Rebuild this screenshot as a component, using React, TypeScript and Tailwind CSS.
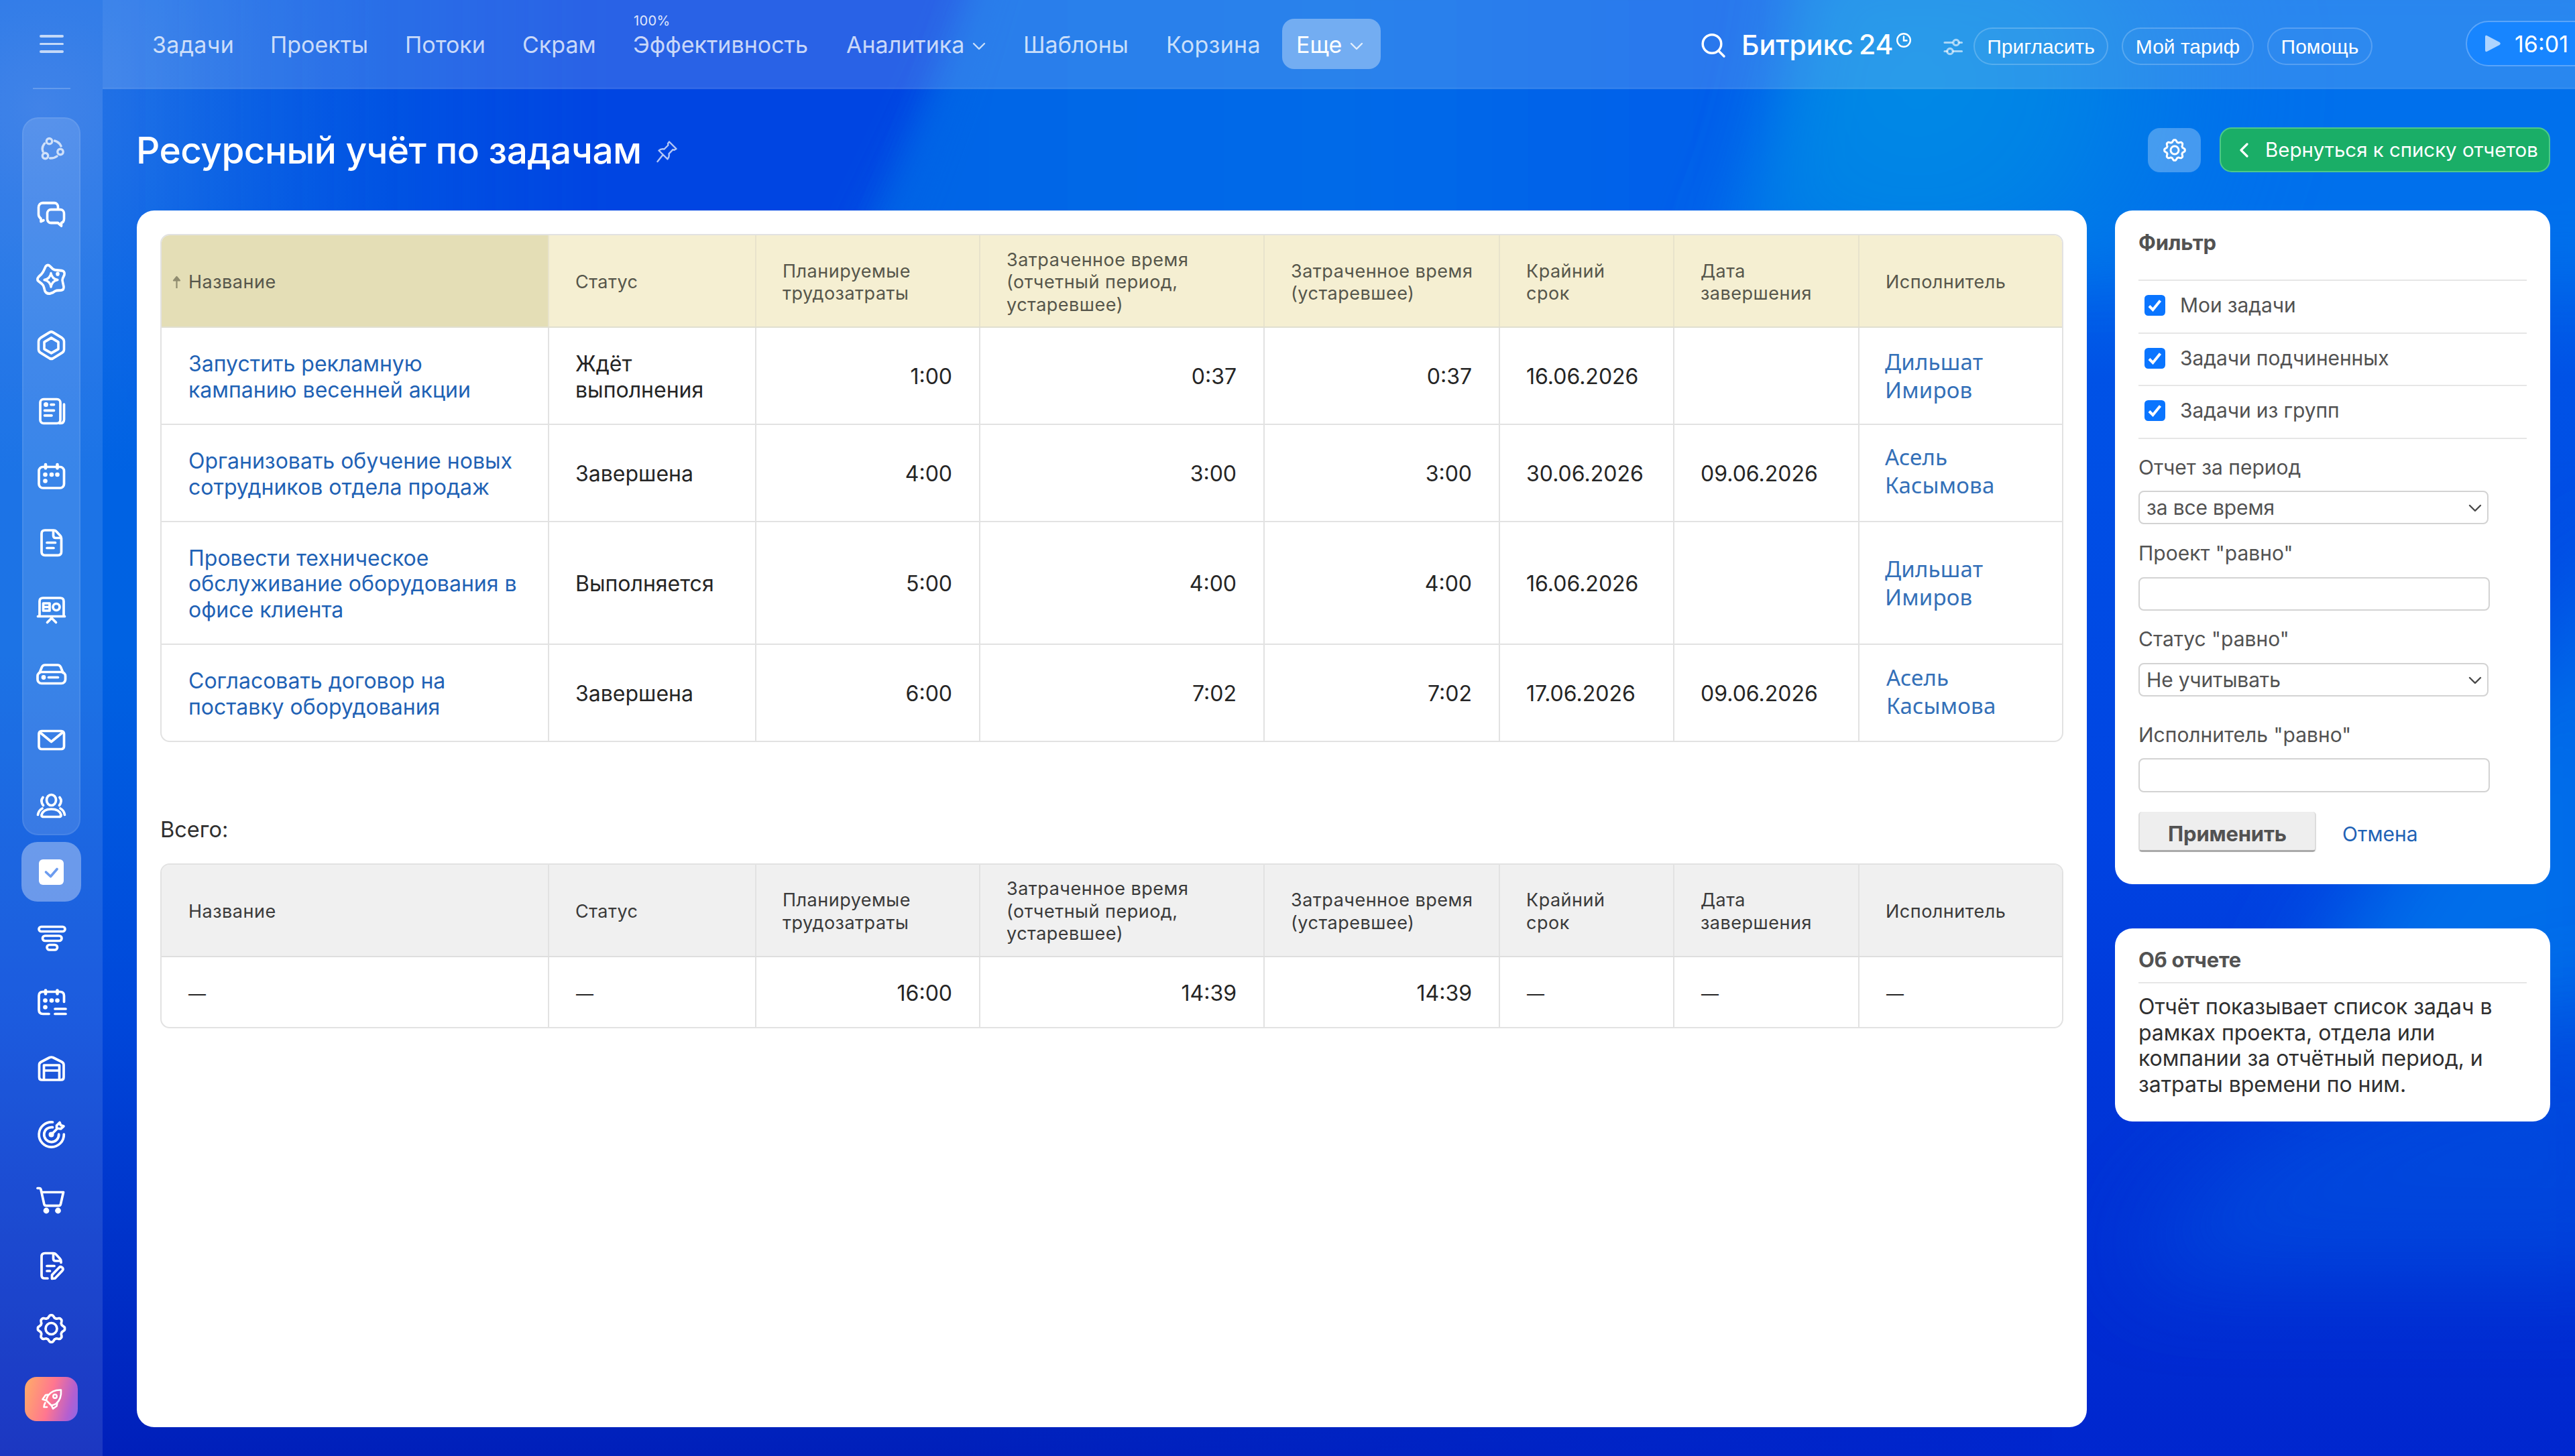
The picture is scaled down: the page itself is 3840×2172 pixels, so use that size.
import React from "react";
import type { ReactNode } from "react";

/* ---------- Wallpaper ---------- */

function Wallpaper() {
  return (
    <svg
      className="absolute inset-0 h-full w-full"
      viewBox="0 0 3840 2172"
      preserveAspectRatio="none"
      aria-hidden="true"
    >
      <defs>
        <linearGradient id="base" x1="0" y1="0" x2="0" y2="1">
          <stop offset="0" stopColor="#0062e6" />
          <stop offset="0.45" stopColor="#0062e2" />
          <stop offset="0.7" stopColor="#0047da" />
          <stop offset="1" stopColor="#001fba" />
        </linearGradient>
        <linearGradient id="bottom" x1="1400" y1="0" x2="3100" y2="0" gradientUnits="userSpaceOnUse">
          <stop offset="0" stopColor="#0026ce" stopOpacity="0" />
          <stop offset="1" stopColor="#0026ce" />
        </linearGradient>
        <linearGradient id="deep" x1="200" y1="0" x2="900" y2="0" gradientUnits="userSpaceOnUse">
          <stop offset="0" stopColor="#0046e0" stopOpacity="0" />
          <stop offset="1" stopColor="#0044e2" />
        </linearGradient>
        <linearGradient id="mid" x1="1300" y1="0" x2="2700" y2="0" gradientUnits="userSpaceOnUse">
          <stop offset="0" stopColor="#0064e6" />
          <stop offset="0.5" stopColor="#006ae8" />
          <stop offset="1" stopColor="#005cea" />
        </linearGradient>
        <linearGradient id="right" x1="0" y1="300" x2="0" y2="2172" gradientUnits="userSpaceOnUse">
          <stop offset="0" stopColor="#006eea" />
          <stop offset="0.14" stopColor="#0052e6" />
          <stop offset="0.5" stopColor="#0044e2" />
          <stop offset="0.72" stopColor="#0036d8" />
          <stop offset="1" stopColor="#0026ce" />
        </linearGradient>
        <radialGradient id="topLeft" cx="60" cy="160" r="560" gradientUnits="userSpaceOnUse">
          <stop offset="0" stopColor="#2a74e6" />
          <stop offset="1" stopColor="#1a70e6" stopOpacity="0" />
        </radialGradient>
        <radialGradient id="cyan" cx="2860" cy="120" r="560" gradientUnits="userSpaceOnUse">
          <stop offset="0" stopColor="#008ae6" />
          <stop offset="0.4" stopColor="#0082e6" />
          <stop offset="1" stopColor="#0074ea" stopOpacity="0" />
        </radialGradient>
        <filter id="b30" x="-20%" y="-20%" width="140%" height="140%">
          <feGaussianBlur stdDeviation="30" />
        </filter>
        <filter id="b50" x="-20%" y="-20%" width="140%" height="140%">
          <feGaussianBlur stdDeviation="50" />
        </filter>
        <filter id="b80" x="-50%" y="-50%" width="200%" height="200%">
          <feGaussianBlur stdDeviation="70" />
        </filter>
      </defs>
      <rect width="3840" height="2172" fill="url(#base)" />
      <rect x="1400" y="2000" width="1800" height="172" fill="url(#bottom)" />
      <rect width="1000" height="900" fill="url(#topLeft)" />
      <path d="M200 -80 H1480 Q1400 120 1290 340 L1200 600 H200Z" fill="url(#deep)" filter="url(#b30)" />
      <path d="M1480 -80 H2700 V600 H1220 Q1400 200 1480 -80Z" fill="url(#mid)" filter="url(#b30)" />
      <rect x="3060" y="280" width="780" height="1892" fill="url(#right)" />
      <path d="M2690 -80 H3940 V400 H2560 Q2670 200 2690 -80Z" fill="#0070ec" filter="url(#b50)" />
      <path d="M2690 -80 H3940 V400 H2560 Q2670 200 2690 -80Z" fill="url(#cyan)" filter="url(#b50)" />
      <path d="M3480 1400 Q3600 1200 3940 800 V1560 H3400Z" fill="#006eea" filter="url(#b80)" />
      <path d="M3180 1900 Q3300 1640 3940 1480 V1900Z" fill="#0050e0" opacity="0.7" filter="url(#b80)" />
    </svg>
  );
}

/* ---------- Icons ---------- */

function gearPath(cx: number, cy: number, r: number, amp: number) {
  let d = "";
  for (let i = 0; i < 160; i++) {
    const a = (i / 160) * Math.PI * 2;
    const rr = r + amp * Math.max(-0.8, Math.min(0.8, Math.cos(8 * a)));
    d += `${i ? "L" : "M"}${(cx + rr * Math.sin(a)).toFixed(2)} ${(cy - rr * Math.cos(a)).toFixed(2)}`;
  }
  return d + "Z";
}

const Dot = ({ x, y, r = 3.3 }: { x: number; y: number; r?: number }) => (
  <circle cx={x} cy={y} r={r} fill="currentColor" stroke="none" />
);

const groupIcons: ReactNode[] = [
  <g opacity="0.72" strokeWidth="3.4">
    <circle cx="73.500" cy="210.700" r="4.200" />
    <circle cx="90" cy="226.500" r="4.200" />
    <circle cx="67.500" cy="232.500" r="4.200" />
    <path d="M81.500 210q7 2 9.500 8M66.500 214q-5 6-2.500 12M74.500 236q6 .500 10.500-3" />
  </g>,
  <g transform="translate(0 -17.6) scale(1 1.11)" strokeWidth="3.600">
    <path d="M86.500 296v-2a5.500 5.500 0 0 0-5.500-5.500H63.500a6 6 0 0 0-6 6V304c0 3 1.500 4.500 3.500 5.500v4l4-1.500" />
    <path d="M76 297.500h14a5.500 5.500 0 0 1 5.500 5.500v7a5.500 5.500 0 0 1-4 5.300v4.200l-5-4H76a5.500 5.500 0 0 1-5.500-5.500v-7a5.500 5.500 0 0 1 5.500-5.500z" />
  </g>,
  <g transform="translate(0 -17.6) scale(1 1.11)" strokeWidth="3.600">
    <path d="M75 374l4 3.500q2 1.500 6 1.500l7 .500q5 1 4 5.500l-2.500 5q-1 2.500 0 5l1.500 6q.500 4.500-4 5l-7 .500q-2 .500-5 2.500l-5 1.500q-5 .500-7-3.500l-1.500-5q-.500-2.500-3.500-5l-5-3.500q-2.500-2.500.500-5.500l4.500-4q2-2 3.500-5l2.500-5q3-3.500 7 0z" />
    <path strokeWidth="3.200" d="M76 383q1.500 7.500 10 9q-8.500 1.500-10 9.500q-1.500-8-10-9.500q8.500-1.500 10-9z" />
    <Dot x={86} y={384} r={2.8} />
  </g>,
  <g transform="translate(0 -17.6) scale(1 1.11)" strokeWidth="3.600">
    <path d="M79 462.500l13.500 7.500q3 1.800 3 5v10.500q0 3-3 4.500L79 497.500q-2.500 1.200-5 0L60.500 490q-3-1.500-3-4.500V475q0-3.200 3-5L74 462.500q2.500-1.200 5 0z" />
    <path d="M76.500 470l10.500 5.500v9.500l-10.500 5.500L66 485v-9.500z" />
  </g>,
  <g>
    <rect x="60" y="595.500" width="30" height="36" rx="5" />
    <path d="M95.500 603v23q0 5.500-6.500 5.500M76 603.600h4.500M66.500 612.300h14M66.500 619.800h10.500" />
    <Dot x={68.5} y={603.6} r={3.5} />
  </g>,
  <g>
    <rect x="58" y="696.500" width="37.500" height="31.500" rx="6" />
    <path d="M68 693v5.500M85.500 693v5.500" strokeWidth="4.600" />
    <Dot x={67.5} y={708} />
    <Dot x={77} y={708} />
    <Dot x={85.5} y={708} />
    <Dot x={67.5} y={717.5} />
  </g>,
  <g>
    <path d="M67 791h13q2.500 0 4 1.800l6 6.500q1.500 1.700 1.500 4v20q0 5-5 5h-19.500q-5 0-5-5v-27.300q0-5 5-5z" />
    <path d="M79.500 792v7q0 3.500 3.500 3.500h7.500M70 809.500h12.500M70 817.500h10" />
  </g>,
  <g>
    <path d="M59 918v-21q0-5 5-5h26q5 0 5 5v21M56.500 919.500h40M70.500 928.500l6.500-6.500 6.500 6.500" />
    <path d="M64.500 900h9.500v11h-9.500zM64.500 905.500h9.500" />
    <circle cx="84" cy="905.500" r="5" />
  </g>,
  <g>
    <path d="M59 1003.500l3.500-8.500q1.500-3 4.500-3h19q3 0 4.500 3l3.500 8.500" />
    <rect x="56" y="1002.500" width="41.500" height="17" rx="6" />
    <Dot x={65} y={1010.5} r={3.4} />
    <path d="M72.500 1010.500h14" />
  </g>,
  <g>
    <rect x="58" y="1090.500" width="37.500" height="27" rx="4" />
    <path d="M59.500 1092.500l17 14 17-14" />
  </g>,
  <g>
    <ellipse cx="76.500" cy="1193.500" rx="7" ry="8" />
    <path d="M65.500 1218.500h22q4 0 3.500-3q-2.500-8.500-14.500-8.500t-14.500 8.500q-.500 3 3.500 3zM64 1189.500q-4.500 5.500 .500 12M89 1189.500q4.500 5.500-.500 12M56.500 1215.500q1-6.500 6.500-9.500M96.500 1215.500q-1-6.500-6.500-9.500" />
  </g>,
];

const lowerIcons: ReactNode[] = [
  <g>
    <rect x="58" y="1382.500" width="39" height="7" rx="3.500" />
    <rect x="63.500" y="1396" width="28.500" height="7.500" rx="3.700" />
    <rect x="70" y="1409.500" width="15.500" height="7.500" rx="3.700" />
  </g>,
  <g>
    <path d="M73 1512.500h-9q-6 0-6-6v-21q0-6 6-6h25.500q6 0 6 6v9M82 1505h16M82 1512.500h16" />
    <path d="M68 1477.500v5M85.500 1477.500v5" strokeWidth="4.600" />
    <Dot x={67.5} y={1492.5} />
    <Dot x={77} y={1492.5} />
    <Dot x={85.5} y={1492.5} />
    <Dot x={67.5} y={1502.5} />
  </g>,
  <g>
    <path d="M58.500 1606.500v-18q0-3 3-4.500l12.500-6.500q2.500-1 5 0l13 6.500q3 1.500 3 4.500v18.500q0 4-4 4h-28.500q-4 0-4-4z" />
    <path d="M65.500 1610.500v-21.500h23v21.500M65.500 1597h23" />
  </g>,
  <g>
    <path d="M78.500 1674a18.600 18.600 0 1 0 16.800 18M78.500 1681.700a11 11 0 1 0 9.200 10.500M76.500 1692.500l8.500-8.500M84.500 1683v-4l4.500-4.500 1.500 4 4.500 1.500-4.500 4z" />
    <Dot x={76.5} y={1692.5} r={4} />
  </g>,
  <g>
    <path d="M56 1772.500h2.500q2 0 2.500 2l4.800 21.700q.700 2.500 3.200 2.500h18.500q2.500 0 3-2.500l4-17.700h-32" />
    <Dot x={69} y={1806} r={4.4} />
    <Dot x={86.5} y={1806} r={4.4} />
  </g>,
  <g>
    <path d="M71 1907h-4.500q-4.500 0-4.500-4.500v-28q0-5 5-5h12.500q2.500 0 4 1.800l6 6.500q1.500 1.700 1.500 4v1.700" />
    <path d="M79.500 1870.500v7q0 3.500 3.500 3.500h7M70 1888.500h11M70 1896h4.500M77.500 1907.500v-5.500l11-11.500q2-1.800 4.500.500q2 2.500 0 4.500l-11 11.500z" />
  </g>,
  <g>
    <path d={gearPath(76.5, 1982, 18.3, 2.2)} />
    <circle cx="76.500" cy="1982" r="8.500" />
  </g>,
];

function RailIcon({ y, children }: { y: number; children: ReactNode }) {
  return (
    <svg
      className="h-full w-full"
      viewBox={`35 ${y} 83 97`}
      fill="none"
      stroke="currentColor"
      strokeWidth="3.700"
      strokeLinecap="round"
      strokeLinejoin="round"
    >
      {children}
    </svg>
  );
}

const Chevron = ({ className }: { className: string }) => (
  <svg className={className} viewBox="0 0 20 12" fill="none" stroke="currentColor" strokeWidth="2.400" strokeLinecap="round" strokeLinejoin="round">
    <path d="M2 2l8 8 8-8" />
  </svg>
);

/* ---------- Sidebar ---------- */

function Sidebar() {
  return (
    <aside className="relative flex h-full w-[153px] shrink-0 flex-col items-center bg-white/[0.11] text-white">
      <div className="flex h-[133px] flex-col items-center">
        <div className="mt-[52px] flex flex-col gap-[8px] opacity-70">
          <span className="block h-[3.500px] w-[36px] rounded bg-white" />
          <span className="block h-[3.500px] w-[36px] rounded bg-white" />
          <span className="block h-[3.500px] w-[36px] rounded bg-white" />
        </div>
        <div className="mt-auto h-[2px] w-[56px] bg-white/20" />
      </div>
      <nav className="mt-[42px] flex h-[1071px] w-[87px] shrink-0 flex-col rounded-[24px] border-2 border-white/[0.07] bg-white/[0.13]">
        {groupIcons.map((icon, i) => (
          <div key={i} className="h-[97px] w-[83px] shrink-0">
            <RailIcon y={177 + 97 * i}>{icon}</RailIcon>
          </div>
        ))}
      </nav>
      <div className="mt-[10px] flex h-[89px] w-[89px] shrink-0 items-center justify-center rounded-[24px] bg-white/35">
        <svg className="h-[38px] w-[37px]" viewBox="0 0 37 38" fill="none">
          <rect width="37" height="38" rx="6" fill="#fff" />
          <path d="M10.500 19l7 6.500 9.500-11" stroke="#6c9cef" strokeWidth="3.700" strokeLinecap="round" strokeLinejoin="round" />
        </svg>
      </div>
      <nav className="mt-[5px] flex flex-col">
        {lowerIcons.map((icon, i) => (
          <div key={i} className="mb-px h-[97px] w-[83px]">
            <RailIcon y={1350 + 98 * i}>{icon}</RailIcon>
          </div>
        ))}
      </nav>
      <div className="mt-[18px] flex h-[66px] w-[79px] items-center justify-center rounded-[18px] bg-[linear-gradient(105deg,#ffa96a_4%,#ff7690_48%,#b45fd0_82%,#8a68e8_100%)]">
        <svg className="h-[34px] w-[34px]" viewBox="59 2070 34 34" fill="none" stroke="#fff" strokeWidth="2.600" strokeLinecap="round" strokeLinejoin="round">
          <path d="M90 2073.500q-13-.500-19.500 8.500q-2 3.500-2.500 7l7.500 7.500q4-.500 7-2.500q8.500-6.500 7.500-20.500z" />
          <circle cx="81" cy="2083" r="2.700" />
          <path d="M70.500 2080.500l-3.500 .500-4.500 6.500 5 1.500M76 2097l2 4.500 5.500-4 1-5M66.500 2092.500q-2 3-2 6.500h4.500" />
        </svg>
      </div>
    </aside>
  );
}

/* ---------- Header ---------- */

function Header() {
  return (
    <header className="flex h-[133px] shrink-0 items-center overflow-hidden bg-white/[0.16] text-[34px] text-white shadow-[inset_0_-3px_0_rgba(255,255,255,0.04)]">
      <nav className="flex shrink-0 items-center whitespace-nowrap pl-[74px] text-white/75">
        <span className="w-[176px] tracking-[0.300px]">Задачи</span>
        <span className="w-[201px]">Проекты</span>
        <span className="w-[175px]">Потоки</span>
        <span className="w-[165px]">Скрам</span>
        <span className="relative w-[318px]">
          Эффективность
          <span className="absolute top-[-20px] left-[1px] text-[20px] leading-[20px] tracking-[0.400px] text-white/85">100%</span>
        </span>
        <span className="flex w-[264px] items-center">
          Аналитика
          <Chevron className="ml-[12px] mt-[4px] h-[12px] w-[20px]" />
        </span>
        <span className="w-[213px]">Шаблоны</span>
        <span className="w-[173px] tracking-[0.300px]">Корзина</span>
      </nav>
      <div className="mb-[3px] flex h-[75px] w-[147px] shrink-0 items-center rounded-[18px] bg-white/35 pl-[21px] pt-[3px]">
        Еще
        <Chevron className="ml-[12px] mt-[4px] h-[12px] w-[20px] shrink-0 text-white/80" />
      </div>
      <svg className="ml-[476px] h-[40px] w-[40px] shrink-0" viewBox="2535 47 40 40" fill="none" stroke="#fff" strokeWidth="3.500" strokeLinecap="round">
        <circle cx="2553" cy="65.500" r="13.800" />
        <path d="M2563 76l8 8" />
      </svg>
      <div className="ml-[22px] flex w-[254px] shrink-0 items-center text-[41px] font-medium leading-[50px]">
        <span>Битрикс</span>
        <span className="mb-[2px] ml-[8px]">24</span>
        <svg className="mb-[14px] ml-[4px] h-[24px] w-[24px] shrink-0" viewBox="0 0 24 24" fill="none" stroke="#fff" strokeWidth="2.400" strokeLinecap="round">
          <circle cx="12" cy="12" r="9.800" />
          <path d="M12 6.500V12.500h4.500" />
        </svg>
      </div>
      <svg className="ml-[46px] mt-[6px] h-[28px] w-[32px] shrink-0 text-white/60" viewBox="2898 55 32 28" fill="none" stroke="currentColor" strokeWidth="3.200" strokeLinecap="round">
        <path d="M2901 62.500h11M2923 62.500h3.500M2901 75.500h3.500M2914 75.500h12.500" />
        <circle cx="2918" cy="62.500" r="4.200" />
        <circle cx="2909" cy="75.500" r="4.200" />
      </svg>
      <div className="mt-[5px] ml-[14px] flex h-[56px] shrink-0 gap-[20px] font-['Liberation_Sans',Arial,sans-serif] text-[30px]">
        <span className="flex w-[201px] items-center justify-center rounded-full border-2 border-white/20 bg-white/[0.02]">Пригласить</span>
        <span className="flex w-[197px] items-center justify-center rounded-full border-2 border-white/20 bg-white/[0.02]">Мой тариф</span>
        <span className="flex w-[157px] items-center justify-center rounded-full border-2 border-white/20 bg-white/[0.02]">Помощь</span>
      </div>
      <div className="mb-[3px] ml-[139px] flex h-[68px] w-[220px] shrink-0 items-center rounded-full border-2 border-[#5aa5fa] bg-[#1785ff]">
        <svg className="ml-[27px] h-[26px] w-[24px] text-white/65" viewBox="0 0 24 26" fill="currentColor">
          <path d="M0 3Q0 0 3 1.200L21.500 11q2.500 2 0 4L3 24.800Q0 26 0 23Z" />
        </svg>
        <span className="ml-[20px]">16:01</span>
      </div>
    </header>
  );
}

function TitleBar() {
  return (
    <div className="flex h-[181px] shrink-0 items-start pl-[50px] pr-[37px] text-white">
      <h1 className="mt-[56px] whitespace-nowrap text-[55px] font-medium leading-[70px] tracking-[-0.550px]">
        Ресурсный учёт по задачам
      </h1>
      <svg className="ml-[22px] mt-[76px] h-[34px] w-[32px] text-white/70" viewBox="0 0 32 34" fill="none" stroke="currentColor" strokeWidth="2.400" strokeLinecap="round" strokeLinejoin="round">
        <path d="M19 2.500L29.500 13l-3 1.800-2-.600-6 6.200q1 5-2 8L3.500 15.500q3-3 8-2l6-6-.500-2.200zM9.500 22L1.500 32" />
      </svg>
      <div className="ml-auto mt-[58px] flex h-[66px] w-[79px] items-center justify-center rounded-[18px] bg-white/[0.27]">
        <svg className="h-[36px] w-[36px]" viewBox="0 0 36 36" fill="none" stroke="#fff" strokeWidth="3" strokeLinejoin="round">
          <path d={gearPath(18, 18, 13.8, 1.9)} />
          <circle cx="18" cy="18" r="6" />
        </svg>
      </div>
      <div className="ml-[28px] mt-[57px] flex h-[67px] w-[493px] items-center rounded-[18px] border-2 border-[#4cc98a] bg-[#1aae67]">
        <svg className="ml-[27px] h-[22px] w-[14px]" viewBox="0 0 14 22" fill="none" stroke="#fff" strokeWidth="3.200" strokeLinecap="round" strokeLinejoin="round">
          <path d="M12 2l-9 9 9 9" />
        </svg>
        <span className="ml-[25px] whitespace-nowrap text-[29.500px] tracking-[-0.050px]">Вернуться к списку отчетов</span>
      </div>
    </div>
  );
}

/* ---------- Tables ---------- */

const GRID = "grid grid-cols-[576px_309px_334px_424px_351px_260px_276px_304px]";
const HEADERS = [
  "Название",
  "Статус",
  "Планируемые\nтрудозатраты",
  "Затраченное время\n(отчетный период,\nустаревшее)",
  "Затраченное время\n(устаревшее)",
  "Крайний\nсрок",
  "Дата\nзавершения",
  "Исполнитель",
];

type Row = { cells: string[]; height: string; person: string };

const ROWS: Row[] = [
  {
    cells: ["Запустить рекламную\nкампанию весенней акции", "Ждёт\nвыполнения", "1:00", "0:37", "0:37", "16.06.2026", "", "Дильшат\nИмиров"],
    height: "h-[145px] border-b-2",
    person: "pl-[38px]",
  },
  {
    cells: ["Организовать обучение новых\nсотрудников отдела продаж", "Завершена", "4:00", "3:00", "3:00", "30.06.2026", "09.06.2026", "Асель\nКасымова"],
    height: "h-[145px] border-b-2",
    person: "pl-[38px] pb-[5px]",
  },
  {
    cells: ["Провести техническое\nобслуживание оборудования в\nофисе клиента", "Выполняется", "5:00", "4:00", "4:00", "16.06.2026", "", "Дильшат\nИмиров"],
    height: "h-[183px] border-b-2",
    person: "pl-[38px]",
  },
  {
    cells: ["Согласовать договор на\nпоставку оборудования", "Завершена", "6:00", "7:02", "7:02", "17.06.2026", "09.06.2026", "Асель\nКасымова"],
    height: "h-[143px]",
    person: "pl-[40px] pb-[4px]",
  },
];

const cellBase = "flex items-center whitespace-pre-line border-[#e2e2e2]";

function cellTone(i: number) {
  if (i === 0) return "pl-[40px] pt-[4px] text-[#1f62b5]";
  if (i >= 2 && i <= 4) return "justify-end pr-[40px] pt-[4px]";
  if (i === 7) return "font-['Noto_Sans','Open_Sans',sans-serif] text-[33px] leading-[42px] tracking-[0.200px] text-[#3470b8]";
  return "pl-[39px] pt-[4px]";
}

function ReportTable() {
  return (
    <div className="overflow-hidden rounded-[14px] border-2 border-[#e2e2e2]">
      <div className={`${GRID} h-[138px] border-b-2 border-[#e0dfd0] text-[27px] leading-[33.500px] tracking-[0.500px] text-[#56564b]`}>
        {HEADERS.map((h, i) => (
          <div
            key={h}
            className={`relative flex items-center whitespace-pre-line pt-[4px] ${i === 0 ? "bg-[#e4deb6] pl-[40px]" : "border-l-2 border-[#e8e3cc] bg-[#f5efd2] pl-[39px]"}`}
          >
            {i === 0 && (
              <svg className="absolute left-[16px] top-[60px] h-[20px] w-[13px]" viewBox="0 0 13 20" fill="none" stroke="#918d70" strokeWidth="2.200" strokeLinejoin="round">
                <path d="M6.500 19V3M2 7.500L6.500 2 11 7.500z" fill="#918d70" />
              </svg>
            )}
            {h}
          </div>
        ))}
      </div>
      {ROWS.map((row, r) => (
        <div key={r} className={`${GRID} ${row.height} border-[#e2e2e2] text-[32px] leading-[38.500px] text-[#252525]`}>
          {row.cells.map((c, i) => (
            <div key={i} className={`${cellBase} ${i ? "border-l-2" : ""} ${cellTone(i)} ${i === 7 ? row.person : ""}`}>
              {c}
            </div>
          ))}
        </div>
      ))}
    </div>
  );
}

const TOTALS = ["—", "—", "16:00", "14:39", "14:39", "—", "—", "—"];

function TotalsTable() {
  return (
    <div className="overflow-hidden rounded-[14px] border-2 border-[#e2e2e2]">
      <div className={`${GRID} h-[138px] border-b-2 border-[#dedede] bg-[#f0f0f0] text-[27px] leading-[33.500px] tracking-[0.500px] text-[#3a3a3a]`}>
        {HEADERS.map((h, i) => (
          <div key={h} className={`flex items-center whitespace-pre-line pt-[3px] ${i ? "border-l-2 border-[#e2e2e2] pl-[39px]" : "pl-[40px]"}`}>
            {h}
          </div>
        ))}
      </div>
      <div className={`${GRID} h-[104px] text-[32px] text-[#252525]`}>
        {TOTALS.map((t, i) => (
          <div key={i} className={`${cellBase} ${i ? "border-l-2" : ""} ${i >= 2 && i <= 4 ? "justify-end pt-[3px] pr-[40px]" : "pt-[5px] pl-[40px] text-[26px]"}`}>
            {t}
          </div>
        ))}
      </div>
    </div>
  );
}

/* ---------- Filter column ---------- */

const Select = ({ children }: { children: string }) => (
  <div className="flex h-[50px] w-[522px] items-center justify-between rounded-[8px] border-2 border-[#d3d3d3] bg-white pl-[10px] pr-[8px] pt-[2px]">
    <span className="tracking-[-0.150px]">{children}</span>
    <Chevron className="h-[12px] w-[20px] text-[#4a4a4a]" />
  </div>
);

const Label = ({ className, children }: { className: string; children: string }) => (
  <div className={`h-[40px] leading-[40px] ${className}`}>{children}</div>
);

function FilterCard() {
  return (
    <section className="h-[1005px] w-[649px] rounded-[26px] bg-white px-[35px] text-[30px] text-[#525252]">
      <h2 className="h-[103px] pt-[28px] text-[31px] font-bold leading-[40px] tracking-[-0.200px]">Фильтр</h2>
      <div className="border-b-2 border-[#e6e6e6]">
        {["Мои задачи", "Задачи подчиненных", "Задачи из групп"].map((t) => (
          <label key={t} className="flex h-[78.500px] items-center border-t-2 border-[#e6e6e6] pb-[3px] pl-[9px] tracking-[-0.100px]">
            <svg className="h-[31px] w-[31px]" viewBox="0 0 31 31" fill="none">
              <rect width="31" height="31" rx="5.500" fill="#0a75ff" />
              <path d="M7 16.500l5.500 5.500L23.500 8.500" stroke="#fff" strokeWidth="4" />
            </svg>
            <span className="ml-[22px]">{t}</span>
          </label>
        ))}
      </div>
      <Label className="mt-[22px] mb-[15px]">Отчет за период</Label>
      <Select>за все время</Select>
      <Label className="mt-[23px] mb-[16px]">Проект "равно"</Label>
      <div className="h-[50px] w-[524px] rounded-[8px] border-2 border-[#d3d3d3]" />
      <Label className="mt-[22px] mb-[16px]">Статус "равно"</Label>
      <Select>Не учитывать</Select>
      <Label className="mt-[37px] mb-[15px]">Исполнитель "равно"</Label>
      <div className="h-[51px] w-[524px] rounded-[8px] border-2 border-[#d3d3d3]" />
      <div className="mt-[29px] flex items-center">
        <button className="h-[60px] w-[265px] rounded-[5px] border-x-2 border-b-[3px] border-x-[#dcdcdc] border-b-[#a9a9a9] bg-[#eeeeee] pt-[10px] text-[31px] font-bold tracking-[-0.200px]">
          Применить
        </button>
        <span className="ml-[39px] pt-[8px] text-[#1f62b5]">Отмена</span>
      </div>
    </section>
  );
}

function AboutCard() {
  return (
    <section className="mt-[66px] h-[288px] w-[649px] rounded-[26px] bg-white px-[35px]">
      <h2 className="h-[80px] pt-[27px] text-[31px] font-bold leading-[40px] tracking-[-0.250px] text-[#525252]">Об отчете</h2>
      <p className="whitespace-pre-line border-t-2 border-[#e6e6e6] pt-[16px] text-[32px] leading-[38.700px] tracking-[-0.050px] text-[#2f2f2f]">
        {"Отчёт показывает список задач в\nрамках проекта, отдела или\nкомпании за отчётный период, и\nзатраты времени по ним."}
      </p>
    </section>
  );
}

export default function App() {
  return (
    <div className="relative h-[2172px] w-[3840px] overflow-hidden bg-[#0044dc] font-['Inter',sans-serif]">
      <Wallpaper />
      <div className="relative flex h-full">
        <Sidebar />
        <div className="flex w-[3687px] flex-col">
          <Header />
          <TitleBar />
          <div className="flex items-start pl-[51px]">
            <main className="h-[1815px] w-[2908px] rounded-[26px] bg-white px-[35px] pt-[35px]">
              <ReportTable />
              <div className="mt-[111px] mb-[30px] h-[40px] text-[32.500px] leading-[40px] text-[#2f2f2f]">Всего:</div>
              <TotalsTable />
            </main>
            <div className="ml-[42px] flex flex-col">
              <FilterCard />
              <AboutCard />
            </div>
          </div>
        </div>
      </div>
    </div>
  );
}
